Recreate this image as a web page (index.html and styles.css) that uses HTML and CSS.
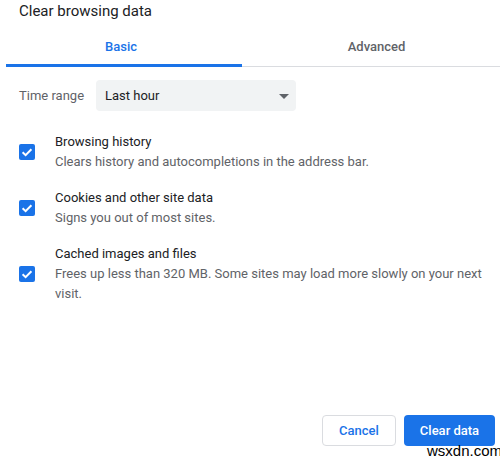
FILE: index.html
```html
<!DOCTYPE html>
<html>
<head>
<meta charset="utf-8">
<link rel="stylesheet" href="styles.css">
</head>
<body>
<div class="dialog">
  <div class="title">Clear browsing data</div>
  <div class="tabs">
    <div class="tab tab-active">Basic</div>
    <div class="tab tab-other">Advanced</div>
  </div>
  <div class="range-row">
    <div class="range-label">Time range</div>
    <div class="select">
      <span>Last hour</span>
      <svg class="arrow" width="10" height="5" viewBox="0 0 10 5"><path d="M0 0 L10 0 L5 5 Z" fill="#5f6368"/></svg>
    </div>
  </div>
  <div class="items">
    <div class="item">
      <div class="checkbox"><svg width="16" height="16" viewBox="0 0 16 16"><path d="M3.6 8.2 L6.6 11.1 L12.4 5.2" fill="none" stroke="#fff" stroke-width="2"/></svg></div>
      <div class="item-text">
        <div class="item-title">Browsing history</div>
        <div class="item-desc">Clears history and autocompletions in the address bar.</div>
      </div>
    </div>
    <div class="item">
      <div class="checkbox"><svg width="16" height="16" viewBox="0 0 16 16"><path d="M3.6 8.2 L6.6 11.1 L12.4 5.2" fill="none" stroke="#fff" stroke-width="2"/></svg></div>
      <div class="item-text">
        <div class="item-title">Cookies and other site data</div>
        <div class="item-desc">Signs you out of most sites.</div>
      </div>
    </div>
    <div class="item">
      <div class="checkbox"><svg width="16" height="16" viewBox="0 0 16 16"><path d="M3.6 8.2 L6.6 11.1 L12.4 5.2" fill="none" stroke="#fff" stroke-width="2"/></svg></div>
      <div class="item-text">
        <div class="item-title">Cached images and files</div>
        <div class="item-desc">Frees up less than 320 MB. Some sites may load more slowly on your next visit.</div>
      </div>
    </div>
  </div>
  <div class="buttons">
    <button class="btn btn-cancel">Cancel</button>
    <button class="btn btn-primary">Clear data</button>
  </div>
</div>
<div class="watermark">wsxdn.com</div>
</body>
</html>
```

FILE: styles.css
```css
html, body {
  margin: 0;
  padding: 0;
  background: #fff;
}
body {
  width: 500px;
  height: 460px;
  overflow: hidden;
  position: relative;
  font-family: Roboto, "Liberation Sans", sans-serif;
  color: #202124;
}
.dialog {
  height: 460px;
  display: flex;
  flex-direction: column;
  box-sizing: border-box;
  padding-bottom: 14px;
}
.title {
  margin-top: 1px;
  padding-left: 19px;
  font-size: 15px;
  line-height: 20px;
  color: #202124;
}
.tabs {
  display: flex;
  margin-left: 6px;
  margin-top: 16px;
  border-bottom: 1px solid #dadce0;
}
.tab {
  font-size: 13px;
  font-weight: 500;
  line-height: 20px;
  padding-bottom: 7px;
  text-align: center;
}
.tab-active {
  width: 236px;
  box-sizing: border-box;
  padding-right: 6px;
  color: #1a73e8;
  border-bottom: 3px solid #1a73e8;
  margin-bottom: -1px;
}
.tab-other {
  flex: 1;
  padding-left: 11px;
  color: #5f6368;
  padding-bottom: 9px;
}
.range-row {
  display: flex;
  align-items: center;
  margin-top: 13px;
  padding-left: 19px;
}
.range-label {
  width: 77px;
  font-size: 13px;
  color: #5f6368;
}
.select {
  width: 200px;
  height: 31px;
  box-sizing: border-box;
  background: #f1f3f4;
  border-radius: 4px;
  display: flex;
  align-items: center;
  justify-content: space-between;
  padding: 0 7px 0 9px;
  font-size: 13px;
  color: #202124;
}
.arrow {
  margin-top: 1px;
}
.items {
  display: flex;
  flex-direction: column;
  gap: 16px;
  margin-top: 21px;
  padding-left: 19px;
}
.item {
  display: flex;
  align-items: center;
  gap: 20px;
}
.checkbox {
  width: 16px;
  height: 16px;
  border-radius: 2px;
  background: #1a73e8;
  flex: none;
  display: flex;
}
.item-text {
  width: 440px;
  font-size: 13px;
  line-height: 20px;
}
.item-title {
  color: #202124;
}
.item-desc {
  color: #5f6368;
}
.buttons {
  margin-top: auto;
  display: flex;
  justify-content: flex-end;
  gap: 8px;
  padding-right: 5px;
}
.btn {
  height: 31px;
  box-sizing: border-box;
  border-radius: 4px;
  font-family: Roboto, "Liberation Sans", sans-serif;
  font-size: 13px;
  font-weight: 500;
  padding: 0;
  cursor: pointer;
}
.btn-cancel {
  width: 74px;
  background: #fff;
  border: 1px solid #dadce0;
  color: #1a73e8;
}
.btn-primary {
  width: 91px;
  background: #1a73e8;
  border: none;
  color: #fff;
}
.watermark {
  position: absolute;
  left: 427px;
  top: 443px;
  font-family: "Liberation Sans", Arial, sans-serif;
  font-size: 15px;
  line-height: 16px;
  color: #000;
}
```
